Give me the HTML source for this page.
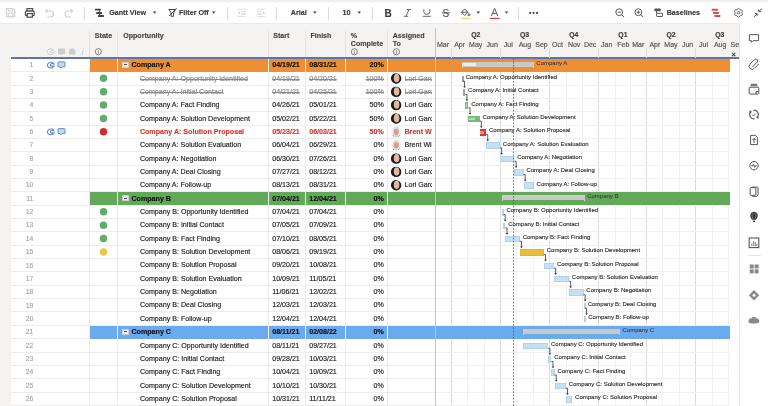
<!DOCTYPE html><html><head><meta charset="utf-8"><style>
*{margin:0;padding:0;box-sizing:border-box}
html,body{width:768px;height:406px;overflow:hidden;background:#f4f3f1;font-family:"Liberation Sans", sans-serif;}
.ab{position:absolute}
.t{position:absolute;white-space:nowrap;line-height:1;-webkit-text-stroke:0.15px currentColor}
svg{position:absolute;overflow:visible}
</style></head><body><div style="position:absolute;left:0;top:0;width:768px;height:406px;will-change:transform">

<div class="ab" style="left:0;top:0;width:768px;height:1.6px;background:#efefef"></div>
<div class="ab" style="left:0;top:1.6px;width:768px;height:0.6px;background:#e2e2e2"></div>
<div class="ab" style="left:0;top:2.2px;width:768px;height:20.4px;background:#fff"></div>
<div class="ab" style="left:0;top:22.6px;width:768px;height:0.6px;background:#e9e9e9"></div>
<div class="ab" style="left:83.8px;top:6.5px;width:0.8px;height:13px;background:#dcdcdc"></div>
<div class="ab" style="left:226.5px;top:6.5px;width:0.8px;height:13px;background:#dcdcdc"></div>
<div class="ab" style="left:276.3px;top:6.5px;width:0.8px;height:13px;background:#dcdcdc"></div>
<div class="ab" style="left:327.90000000000003px;top:6.5px;width:0.8px;height:13px;background:#dcdcdc"></div>
<div class="ab" style="left:372.1px;top:6.5px;width:0.8px;height:13px;background:#dcdcdc"></div>
<div class="ab" style="left:517.9px;top:6.5px;width:0.8px;height:13px;background:#dcdcdc"></div>
<svg style="left:0;top:0" width="1" height="1"><g fill="none" stroke="#d4d4d4" stroke-width="1.2">
<path d="M6.4 8.6 H13.2 L14.8 10.2 V16.6 H6.4Z"/><path d="M8.4 8.6 V11 H12.4 V8.6"/><rect x="8.2" y="13.2" width="4.6" height="3.4"/></g></svg>
<svg style="left:0;top:0" width="1" height="1"><g fill="none" stroke="#555" stroke-width="1.3">
<path d="M27 11 V8.6 H32.6 V11"/><rect x="25.4" y="11" width="8.8" height="4.6" rx="1.2"/><rect x="27.2" y="13.6" width="5.2" height="3.6" fill="#fff"/></g></svg>
<svg style="left:0;top:0" width="1" height="1"><g fill="none" stroke="#cfcfcf" stroke-width="1.1">
<path d="M46 11 H50.5 A3 3 0 0 1 50.5 17 H47.5"/><path d="M47.6 9.2 L45.8 11 L47.6 12.8"/>
<path d="M72.5 11 H68 A3 3 0 0 0 68 17 H71"/><path d="M70.9 9.2 L72.7 11 L70.9 12.8"/></g></svg>
<svg style="left:0;top:0" width="1" height="1"><g fill="#444">
<rect x="94.9" y="8.7" width="6" height="1.9" rx="0.5"/><rect x="96.2" y="12" width="5.8" height="1.9" rx="0.5"/><rect x="98" y="15.1" width="6" height="1.9" rx="0.5"/><rect x="99" y="10" width="1" height="5.5"/></g></svg>
<div class="t" style="left:109.2px;top:10.3975px;font-size:7.15px;color:#3a3a3a;font-weight:bold;height:7.15px;line-height:7.15px;">Gantt View</div>
<svg style="left:0;top:0" width="1" height="1"><path d="M152.79999999999998 11.5 L156.4 11.5 L154.6 13.7Z" fill="#444"/></svg>
<svg style="left:0;top:0" width="1" height="1"><g fill="none" stroke="#444" stroke-width="1">
<path d="M168.9 9.5 H175.5 L173.6 13 V16.3 H171.2 V13Z" stroke-linejoin="round"/><path d="M169.1 15.9 L176.6 8.2"/></g></svg>
<div class="t" style="left:179.0px;top:10.3975px;font-size:7.15px;color:#3a3a3a;font-weight:bold;height:7.15px;line-height:7.15px;">Filter Off</div>
<svg style="left:0;top:0" width="1" height="1"><path d="M211.95 11.5 L215.55 11.5 L213.75 13.7Z" fill="#444"/></svg>
<svg style="left:0;top:0" width="1" height="1"><g fill="none" stroke="#d6d6d6" stroke-width="0.8">
<path d="M237.2 9.2 H245.8 M241 11.4 H245.8 M241 13.4 H245.8 M241 14.2 H245.8 M237.2 16.4 H245.8"/>
<path d="M256.8 9.2 H265.2 M256.8 11.4 H261.8 M256.8 13.4 H261.8 M256.8 14.2 H261.8 M256.8 16.4 H265.2"/></g>
<path d="M239.9 11 L237.9 12.9 L239.9 14.8Z" fill="#d6d6d6"/><path d="M263 11 L265 12.9 L263 14.8Z" fill="#d6d6d6"/></svg>
<div class="t" style="left:290.8px;top:10.3975px;font-size:7.15px;color:#3a3a3a;font-weight:bold;height:7.15px;line-height:7.15px;">Arial</div>
<svg style="left:0;top:0" width="1" height="1"><path d="M313.0 11.5 L316.6 11.5 L314.8 13.7Z" fill="#444"/></svg>
<div class="t" style="left:342.5px;top:10.3975px;font-size:7.15px;color:#3a3a3a;font-weight:bold;height:7.15px;line-height:7.15px;">10</div>
<svg style="left:0;top:0" width="1" height="1"><path d="M357.4 11.5 L361.0 11.5 L359.2 13.7Z" fill="#444"/></svg>
<div class="t" style="left:384.4px;top:8.5px;font-size:10.0px;color:#3a3a3a;font-weight:bold;height:10.0px;line-height:10.0px;">B</div>
<div class="t" style="left:442.4px;top:8.7px;font-size:10.0px;color:#555;font-weight:normal;height:10.0px;line-height:10.0px;-webkit-text-stroke:0.1px #555">S</div>
<svg style="left:0;top:0" width="1" height="1"><g fill="none" stroke="#555" stroke-width="0.9">
<path d="M406.6 9.6 H410.9 M403.9 16.3 H408.2 M408.9 9.6 L406.0 16.3"/>
<path d="M423.8 9.2 V11.8 A3 2.5 0 0 0 429.8 11.8 V9.2"/><path d="M422.8 16.3 H430.8"/>
<path d="M441.8 12.9 H450.2"/>
</g></svg>
<svg style="left:0;top:0" width="1" height="1"><g fill="none" stroke="#555" stroke-width="1">
<path d="M464.75 8.9 L468 12.2 L464.75 15.5 L461.5 12.2Z"/><path d="M461.6 12.2 H467.9"/><circle cx="469" cy="14.8" r="1" /></g>
<rect x="461" y="17.8" width="10" height="1.2" fill="#f3d77a"/></svg>
<svg style="left:0;top:0" width="1" height="1"><path d="M476.5 11.5 L480.1 11.5 L478.3 13.7Z" fill="#444"/></svg>
<svg style="left:0;top:0" width="1" height="1"><g fill="none" stroke="#555" stroke-width="1">
<path d="M491.4 16 L494.6 8.4 L497.8 16 M492.6 13.4 H496.6"/></g>
<rect x="489.8" y="17.8" width="9.8" height="1.2" fill="#dd4040"/></svg>
<svg style="left:0;top:0" width="1" height="1"><path d="M504.7 11.5 L508.3 11.5 L506.5 13.7Z" fill="#444"/></svg>
<svg style="left:0;top:0" width="1" height="1"><g fill="#444"><circle cx="530.2" cy="12.9" r="1.05"/><circle cx="533.6" cy="12.9" r="1.05"/><circle cx="537" cy="12.9" r="1.05"/></g></svg>
<svg style="left:0;top:0" width="1" height="1"><g fill="none" stroke="#555" stroke-width="1">
<circle cx="619.2" cy="12.2" r="3.4"/><path d="M621.7 14.7 L624 17"/><path d="M617.6 12.2 H620.8"/>
<circle cx="638.4" cy="12.2" r="3.4"/><path d="M640.9 14.7 L643.2 17"/><path d="M636.8 12.2 H640 M638.4 10.6 V13.8"/></g></svg>
<svg style="left:0;top:0" width="1" height="1"><rect x="654.3" y="8.4" width="6.6" height="2.8" rx="1" fill="#555"/><rect x="656.6" y="13.3" width="6" height="3.2" rx="0.6" fill="none" stroke="#555" stroke-width="1"/><rect x="656" y="11" width="1" height="2.4" fill="#555"/></svg>
<div class="t" style="left:666.7px;top:10.3975px;font-size:7.15px;color:#3a3a3a;font-weight:bold;height:7.15px;line-height:7.15px;">Baselines</div>
<svg style="left:0;top:0" width="1" height="1"><g fill="#d64f4a">
<rect x="711.5" y="8.7" width="6.5" height="2" rx="0.8"/><rect x="712.9" y="12" width="6.2" height="2" rx="0.8"/><rect x="714.2" y="14.9" width="6.4" height="2" rx="0.8"/></g></svg>
<svg style="left:0;top:0" width="1" height="1"><g fill="none" stroke="#555" stroke-width="0.9">
<path d="M736.85 9.94 Q738.50 6.90 740.15 9.94 Q743.61 9.85 741.80 12.80 Q743.61 15.75 740.15 15.66 Q738.50 18.70 736.85 15.66 Q733.39 15.75 735.20 12.80 Q733.39 9.85 736.85 9.94Z" stroke-linejoin="round"/><circle cx="738.5" cy="12.8" r="1.3"/></g></svg>
<svg style="left:0;top:0" width="1" height="1"><g stroke="#555" stroke-width="1" fill="none"><path d="M754.2 16.8 L757 14 M755 13.6 H757.2 V15.8"/><path d="M761.9 8.6 L759 11.4 M758.7 9.3 V11.6 H760.9"/></g></svg>
<div class="ab" style="left:89.1px;top:30.5px;width:0.8px;height:27.0px;background:#e3e2df"></div>
<div class="ab" style="left:117.19999999999999px;top:30.5px;width:0.8px;height:27.0px;background:#e3e2df"></div>
<div class="ab" style="left:268.0px;top:30.5px;width:0.8px;height:27.0px;background:#e3e2df"></div>
<div class="ab" style="left:305.0px;top:30.5px;width:0.8px;height:27.0px;background:#e3e2df"></div>
<div class="ab" style="left:345.0px;top:30.5px;width:0.8px;height:27.0px;background:#e3e2df"></div>
<div class="ab" style="left:387.0px;top:30.5px;width:0.8px;height:27.0px;background:#e3e2df"></div>
<div class="t" style="left:94.8px;top:33.115px;font-size:7.1px;color:#454545;font-weight:bold;height:7.1px;line-height:7.1px;">State</div>
<div class="t" style="left:123.2px;top:33.115px;font-size:7.1px;color:#454545;font-weight:bold;height:7.1px;line-height:7.1px;">Opportunity</div>
<div class="t" style="left:273.2px;top:33.115px;font-size:7.1px;color:#454545;font-weight:bold;height:7.1px;line-height:7.1px;">Start</div>
<div class="t" style="left:310.5px;top:33.115px;font-size:7.1px;color:#454545;font-weight:bold;height:7.1px;line-height:7.1px;">Finish</div>
<div class="t" style="left:350.8px;top:33.115px;font-size:7.1px;color:#454545;font-weight:bold;height:7.1px;line-height:7.1px;">%</div>
<div class="t" style="left:350.8px;top:40.915px;font-size:7.1px;color:#454545;font-weight:bold;height:7.1px;line-height:7.1px;">Complete</div>
<div class="t" style="left:392.7px;top:33.115px;font-size:7.1px;color:#454545;font-weight:bold;height:7.1px;line-height:7.1px;">Assigned</div>
<div class="t" style="left:392.7px;top:40.915px;font-size:7.1px;color:#454545;font-weight:bold;height:7.1px;line-height:7.1px;">To</div>
<svg style="left:0;top:0" width="1" height="1"><circle cx="98.4" cy="51.7" r="3.1" fill="none" stroke="#666" stroke-width="0.8"/><path d="M98.4 51.2 V53.5" stroke="#666" stroke-width="0.8"/><circle cx="98.4" cy="50.1" r="0.45" fill="#666"/></svg>
<svg style="left:0;top:0" width="1" height="1"><circle cx="354.4" cy="51.8" r="3.1" fill="none" stroke="#666" stroke-width="0.8"/><path d="M354.4 51.3 V53.599999999999994" stroke="#666" stroke-width="0.8"/><circle cx="354.4" cy="50.199999999999996" r="0.45" fill="#666"/></svg>
<svg style="left:0;top:0" width="1" height="1"><circle cx="396.4" cy="51.8" r="3.1" fill="none" stroke="#666" stroke-width="0.8"/><path d="M396.4 51.3 V53.599999999999994" stroke="#666" stroke-width="0.8"/><circle cx="396.4" cy="50.199999999999996" r="0.45" fill="#666"/></svg>
<svg style="left:0;top:0" width="1" height="1"><path d="M53.9 50.7 A3.5 2.8 0 1 0 53.2 53.7 M54.0 51.5 A1.9 1.5 0 1 0 50.800000000000004 52.800000000000004 H54.4" fill="none" stroke="#cdcdcd" stroke-width="1.0"/><g fill="#cdcdcd" stroke="#cdcdcd">
<path d="M58.6 48.6 H64.6 Q65.2 48.6 65.2 49.2 V53.6 Q65.2 54.2 64.6 54.2 H61.6 L60.6 55.4 L60 54.2 H58.6 Q58 54.2 58 53.6 V49.2 Q58 48.6 58.6 48.6Z" stroke="none"/>
<rect x="69" y="49.6" width="6.4" height="4.8" rx="0.6" stroke="none"/><rect x="70.4" y="48.6" width="3.6" height="1.4" rx="0.5" stroke="none"/>
<path d="M83.1 50.2 L82.1 55" stroke-width="0.9" fill="none"/><circle cx="83.5" cy="48.6" r="0.5" stroke="none"/></g></svg>
<div class="ab" style="left:10.5px;top:57.4px;width:729.0px;height:1.3px;background:#5d75a8"></div>
<div class="ab" style="left:10.5px;top:58.5px;width:425.0px;height:347.5px;background:#fff"></div>
<div class="ab" style="left:435.5px;top:58.5px;width:304.0px;height:347.5px;background:#fff"></div>
<div class="ab" style="left:451.1px;top:58.5px;width:0.8px;height:347.5px;background:#dcdcdc"></div>
<div class="ab" style="left:467.15000000000003px;top:58.5px;width:0.8px;height:347.5px;background:#f1f1f1"></div>
<div class="ab" style="left:483.735px;top:58.5px;width:0.8px;height:347.5px;background:#f1f1f1"></div>
<div class="ab" style="left:499.785px;top:58.5px;width:0.8px;height:347.5px;background:#dcdcdc"></div>
<div class="ab" style="left:516.37px;top:58.5px;width:0.8px;height:347.5px;background:#f1f1f1"></div>
<div class="ab" style="left:532.955px;top:58.5px;width:0.8px;height:347.5px;background:#f1f1f1"></div>
<div class="ab" style="left:549.005px;top:58.5px;width:0.8px;height:347.5px;background:#dcdcdc"></div>
<div class="ab" style="left:565.59px;top:58.5px;width:0.8px;height:347.5px;background:#f1f1f1"></div>
<div class="ab" style="left:581.64px;top:58.5px;width:0.8px;height:347.5px;background:#f1f1f1"></div>
<div class="ab" style="left:598.225px;top:58.5px;width:0.8px;height:347.5px;background:#dcdcdc"></div>
<div class="ab" style="left:614.8100000000001px;top:58.5px;width:0.8px;height:347.5px;background:#f1f1f1"></div>
<div class="ab" style="left:629.7900000000001px;top:58.5px;width:0.8px;height:347.5px;background:#f1f1f1"></div>
<div class="ab" style="left:646.375px;top:58.5px;width:0.8px;height:347.5px;background:#dcdcdc"></div>
<div class="ab" style="left:662.4250000000001px;top:58.5px;width:0.8px;height:347.5px;background:#f1f1f1"></div>
<div class="ab" style="left:679.0100000000001px;top:58.5px;width:0.8px;height:347.5px;background:#f1f1f1"></div>
<div class="ab" style="left:695.0600000000001px;top:58.5px;width:0.8px;height:347.5px;background:#dcdcdc"></div>
<div class="ab" style="left:711.6450000000001px;top:58.5px;width:0.8px;height:347.5px;background:#f1f1f1"></div>
<div class="ab" style="left:728.23px;top:58.5px;width:0.8px;height:347.5px;background:#f1f1f1"></div>
<div class="ab" style="left:728.2px;top:58.5px;width:0.8px;height:347.5px;background:#f0f0f0"></div>
<div class="ab" style="left:10.5px;top:71.14999999999999px;width:425.0px;height:0.8px;background:#ededed"></div>
<div class="ab" style="left:435.5px;top:71.14999999999999px;width:294.6px;height:0.8px;background:#f1f1f1"></div>
<div class="ab" style="left:10.5px;top:84.49999999999999px;width:425.0px;height:0.8px;background:#ededed"></div>
<div class="ab" style="left:435.5px;top:84.49999999999999px;width:294.6px;height:0.8px;background:#f1f1f1"></div>
<div class="ab" style="left:10.5px;top:97.85px;width:425.0px;height:0.8px;background:#ededed"></div>
<div class="ab" style="left:435.5px;top:97.85px;width:294.6px;height:0.8px;background:#f1f1f1"></div>
<div class="ab" style="left:10.5px;top:111.19999999999999px;width:425.0px;height:0.8px;background:#ededed"></div>
<div class="ab" style="left:435.5px;top:111.19999999999999px;width:294.6px;height:0.8px;background:#f1f1f1"></div>
<div class="ab" style="left:10.5px;top:124.54999999999998px;width:425.0px;height:0.8px;background:#ededed"></div>
<div class="ab" style="left:435.5px;top:124.54999999999998px;width:294.6px;height:0.8px;background:#f1f1f1"></div>
<div class="ab" style="left:10.5px;top:137.9px;width:425.0px;height:0.8px;background:#ededed"></div>
<div class="ab" style="left:435.5px;top:137.9px;width:294.6px;height:0.8px;background:#f1f1f1"></div>
<div class="ab" style="left:10.5px;top:151.24999999999997px;width:425.0px;height:0.8px;background:#ededed"></div>
<div class="ab" style="left:435.5px;top:151.24999999999997px;width:294.6px;height:0.8px;background:#f1f1f1"></div>
<div class="ab" style="left:10.5px;top:164.6px;width:425.0px;height:0.8px;background:#ededed"></div>
<div class="ab" style="left:435.5px;top:164.6px;width:294.6px;height:0.8px;background:#f1f1f1"></div>
<div class="ab" style="left:10.5px;top:177.95px;width:425.0px;height:0.8px;background:#ededed"></div>
<div class="ab" style="left:435.5px;top:177.95px;width:294.6px;height:0.8px;background:#f1f1f1"></div>
<div class="ab" style="left:10.5px;top:191.29999999999998px;width:425.0px;height:0.8px;background:#ededed"></div>
<div class="ab" style="left:435.5px;top:191.29999999999998px;width:294.6px;height:0.8px;background:#f1f1f1"></div>
<div class="ab" style="left:10.5px;top:204.65px;width:425.0px;height:0.8px;background:#ededed"></div>
<div class="ab" style="left:435.5px;top:204.65px;width:294.6px;height:0.8px;background:#f1f1f1"></div>
<div class="ab" style="left:10.5px;top:217.99999999999997px;width:425.0px;height:0.8px;background:#ededed"></div>
<div class="ab" style="left:435.5px;top:217.99999999999997px;width:294.6px;height:0.8px;background:#f1f1f1"></div>
<div class="ab" style="left:10.5px;top:231.35px;width:425.0px;height:0.8px;background:#ededed"></div>
<div class="ab" style="left:435.5px;top:231.35px;width:294.6px;height:0.8px;background:#f1f1f1"></div>
<div class="ab" style="left:10.5px;top:244.69999999999996px;width:425.0px;height:0.8px;background:#ededed"></div>
<div class="ab" style="left:435.5px;top:244.69999999999996px;width:294.6px;height:0.8px;background:#f1f1f1"></div>
<div class="ab" style="left:10.5px;top:258.05px;width:425.0px;height:0.8px;background:#ededed"></div>
<div class="ab" style="left:435.5px;top:258.05px;width:294.6px;height:0.8px;background:#f1f1f1"></div>
<div class="ab" style="left:10.5px;top:271.40000000000003px;width:425.0px;height:0.8px;background:#ededed"></div>
<div class="ab" style="left:435.5px;top:271.40000000000003px;width:294.6px;height:0.8px;background:#f1f1f1"></div>
<div class="ab" style="left:10.5px;top:284.75px;width:425.0px;height:0.8px;background:#ededed"></div>
<div class="ab" style="left:435.5px;top:284.75px;width:294.6px;height:0.8px;background:#f1f1f1"></div>
<div class="ab" style="left:10.5px;top:298.1px;width:425.0px;height:0.8px;background:#ededed"></div>
<div class="ab" style="left:435.5px;top:298.1px;width:294.6px;height:0.8px;background:#f1f1f1"></div>
<div class="ab" style="left:10.5px;top:311.45px;width:425.0px;height:0.8px;background:#ededed"></div>
<div class="ab" style="left:435.5px;top:311.45px;width:294.6px;height:0.8px;background:#f1f1f1"></div>
<div class="ab" style="left:10.5px;top:324.8px;width:425.0px;height:0.8px;background:#ededed"></div>
<div class="ab" style="left:435.5px;top:324.8px;width:294.6px;height:0.8px;background:#f1f1f1"></div>
<div class="ab" style="left:10.5px;top:338.15000000000003px;width:425.0px;height:0.8px;background:#ededed"></div>
<div class="ab" style="left:435.5px;top:338.15000000000003px;width:294.6px;height:0.8px;background:#f1f1f1"></div>
<div class="ab" style="left:10.5px;top:351.5px;width:425.0px;height:0.8px;background:#ededed"></div>
<div class="ab" style="left:435.5px;top:351.5px;width:294.6px;height:0.8px;background:#f1f1f1"></div>
<div class="ab" style="left:10.5px;top:364.85px;width:425.0px;height:0.8px;background:#ededed"></div>
<div class="ab" style="left:435.5px;top:364.85px;width:294.6px;height:0.8px;background:#f1f1f1"></div>
<div class="ab" style="left:10.5px;top:378.20000000000005px;width:425.0px;height:0.8px;background:#ededed"></div>
<div class="ab" style="left:435.5px;top:378.20000000000005px;width:294.6px;height:0.8px;background:#f1f1f1"></div>
<div class="ab" style="left:10.5px;top:391.55px;width:425.0px;height:0.8px;background:#ededed"></div>
<div class="ab" style="left:435.5px;top:391.55px;width:294.6px;height:0.8px;background:#f1f1f1"></div>
<div class="ab" style="left:10.5px;top:404.90000000000003px;width:425.0px;height:0.8px;background:#ededed"></div>
<div class="ab" style="left:435.5px;top:404.90000000000003px;width:294.6px;height:0.8px;background:#f1f1f1"></div>
<div class="ab" style="left:89.5px;top:58.5px;width:346.0px;height:13.15px;background:#ef8f35"></div>
<div class="ab" style="left:435.5px;top:58.5px;width:294.6px;height:13.15px;background:#ef8f35"></div>
<div class="ab" style="left:89.5px;top:192.0px;width:346.0px;height:13.15px;background:#62aa5a"></div>
<div class="ab" style="left:435.5px;top:192.0px;width:294.6px;height:13.15px;background:#62aa5a"></div>
<div class="ab" style="left:89.5px;top:325.5px;width:346.0px;height:13.15px;background:#6aabef"></div>
<div class="ab" style="left:435.5px;top:325.5px;width:294.6px;height:13.15px;background:#6aabef"></div>
<div class="ab" style="left:89.1px;top:58.5px;width:0.8px;height:347.5px;background:#ececec"></div>
<div class="ab" style="left:117.19999999999999px;top:58.5px;width:0.8px;height:347.5px;background:#ececec"></div>
<div class="ab" style="left:268.0px;top:58.5px;width:0.8px;height:347.5px;background:#ececec"></div>
<div class="ab" style="left:305.0px;top:58.5px;width:0.8px;height:347.5px;background:#ececec"></div>
<div class="ab" style="left:345.0px;top:58.5px;width:0.8px;height:347.5px;background:#ececec"></div>
<div class="ab" style="left:387.0px;top:58.5px;width:0.8px;height:347.5px;background:#ececec"></div>
<div class="ab" style="left:117.19999999999999px;top:58.3px;width:0.8px;height:12.849999999999994px;background:rgba(255,255,255,0.22)"></div>
<div class="ab" style="left:268.0px;top:58.3px;width:0.8px;height:12.849999999999994px;background:rgba(255,255,255,0.22)"></div>
<div class="ab" style="left:305.0px;top:58.3px;width:0.8px;height:12.849999999999994px;background:rgba(255,255,255,0.22)"></div>
<div class="ab" style="left:345.0px;top:58.3px;width:0.8px;height:12.849999999999994px;background:rgba(255,255,255,0.22)"></div>
<div class="ab" style="left:387.0px;top:58.3px;width:0.8px;height:12.849999999999994px;background:rgba(255,255,255,0.22)"></div>
<div class="ab" style="left:117.19999999999999px;top:191.8px;width:0.8px;height:12.849999999999994px;background:rgba(255,255,255,0.22)"></div>
<div class="ab" style="left:268.0px;top:191.8px;width:0.8px;height:12.849999999999994px;background:rgba(255,255,255,0.22)"></div>
<div class="ab" style="left:305.0px;top:191.8px;width:0.8px;height:12.849999999999994px;background:rgba(255,255,255,0.22)"></div>
<div class="ab" style="left:345.0px;top:191.8px;width:0.8px;height:12.849999999999994px;background:rgba(255,255,255,0.22)"></div>
<div class="ab" style="left:387.0px;top:191.8px;width:0.8px;height:12.849999999999994px;background:rgba(255,255,255,0.22)"></div>
<div class="ab" style="left:117.19999999999999px;top:325.3px;width:0.8px;height:12.850000000000023px;background:rgba(255,255,255,0.22)"></div>
<div class="ab" style="left:268.0px;top:325.3px;width:0.8px;height:12.850000000000023px;background:rgba(255,255,255,0.22)"></div>
<div class="ab" style="left:305.0px;top:325.3px;width:0.8px;height:12.850000000000023px;background:rgba(255,255,255,0.22)"></div>
<div class="ab" style="left:345.0px;top:325.3px;width:0.8px;height:12.850000000000023px;background:rgba(255,255,255,0.22)"></div>
<div class="ab" style="left:387.0px;top:325.3px;width:0.8px;height:12.850000000000023px;background:rgba(255,255,255,0.22)"></div>
<div class="ab" style="left:434.7px;top:28px;width:1.8px;height:378px;background:#c4c4c4"></div>
<div class="t" style="left:434.915px;top:41.25px;font-size:7.0px;color:#505050;font-weight:normal;height:7.0px;line-height:7.0px;"><span style="display:inline-block;width:16.26px;text-align:center">Mar</span></div>
<div class="t" style="left:451.5px;top:41.25px;font-size:7.0px;color:#505050;font-weight:normal;height:7.0px;line-height:7.0px;"><span style="display:inline-block;width:16.26px;text-align:center">Apr</span></div>
<div class="ab" style="left:451.1px;top:48px;width:0.8px;height:9.5px;background:#dcdcdc"></div>
<div class="t" style="left:467.55px;top:41.25px;font-size:7.0px;color:#505050;font-weight:normal;height:7.0px;line-height:7.0px;"><span style="display:inline-block;width:16.26px;text-align:center">May</span></div>
<div class="t" style="left:484.135px;top:41.25px;font-size:7.0px;color:#505050;font-weight:normal;height:7.0px;line-height:7.0px;"><span style="display:inline-block;width:16.26px;text-align:center">Jun</span></div>
<div class="t" style="left:500.185px;top:41.25px;font-size:7.0px;color:#505050;font-weight:normal;height:7.0px;line-height:7.0px;"><span style="display:inline-block;width:16.26px;text-align:center">Jul</span></div>
<div class="ab" style="left:499.785px;top:48px;width:0.8px;height:9.5px;background:#dcdcdc"></div>
<div class="t" style="left:516.77px;top:41.25px;font-size:7.0px;color:#505050;font-weight:normal;height:7.0px;line-height:7.0px;"><span style="display:inline-block;width:16.26px;text-align:center">Aug</span></div>
<div class="t" style="left:533.355px;top:41.25px;font-size:7.0px;color:#505050;font-weight:normal;height:7.0px;line-height:7.0px;"><span style="display:inline-block;width:16.26px;text-align:center">Sep</span></div>
<div class="t" style="left:549.405px;top:41.25px;font-size:7.0px;color:#505050;font-weight:normal;height:7.0px;line-height:7.0px;"><span style="display:inline-block;width:16.26px;text-align:center">Oct</span></div>
<div class="ab" style="left:549.005px;top:48px;width:0.8px;height:9.5px;background:#dcdcdc"></div>
<div class="t" style="left:565.99px;top:41.25px;font-size:7.0px;color:#505050;font-weight:normal;height:7.0px;line-height:7.0px;"><span style="display:inline-block;width:16.26px;text-align:center">Nov</span></div>
<div class="t" style="left:582.04px;top:41.25px;font-size:7.0px;color:#505050;font-weight:normal;height:7.0px;line-height:7.0px;"><span style="display:inline-block;width:16.26px;text-align:center">Dec</span></div>
<div class="t" style="left:598.625px;top:41.25px;font-size:7.0px;color:#505050;font-weight:normal;height:7.0px;line-height:7.0px;"><span style="display:inline-block;width:16.26px;text-align:center">Jan</span></div>
<div class="ab" style="left:598.225px;top:48px;width:0.8px;height:9.5px;background:#dcdcdc"></div>
<div class="t" style="left:615.21px;top:41.25px;font-size:7.0px;color:#505050;font-weight:normal;height:7.0px;line-height:7.0px;"><span style="display:inline-block;width:16.26px;text-align:center">Feb</span></div>
<div class="t" style="left:630.19px;top:41.25px;font-size:7.0px;color:#505050;font-weight:normal;height:7.0px;line-height:7.0px;"><span style="display:inline-block;width:16.26px;text-align:center">Mar</span></div>
<div class="t" style="left:646.775px;top:41.25px;font-size:7.0px;color:#505050;font-weight:normal;height:7.0px;line-height:7.0px;"><span style="display:inline-block;width:16.26px;text-align:center">Apr</span></div>
<div class="ab" style="left:646.375px;top:48px;width:0.8px;height:9.5px;background:#dcdcdc"></div>
<div class="t" style="left:662.825px;top:41.25px;font-size:7.0px;color:#505050;font-weight:normal;height:7.0px;line-height:7.0px;"><span style="display:inline-block;width:16.26px;text-align:center">May</span></div>
<div class="t" style="left:679.4100000000001px;top:41.25px;font-size:7.0px;color:#505050;font-weight:normal;height:7.0px;line-height:7.0px;"><span style="display:inline-block;width:16.26px;text-align:center">Jun</span></div>
<div class="t" style="left:695.46px;top:41.25px;font-size:7.0px;color:#505050;font-weight:normal;height:7.0px;line-height:7.0px;"><span style="display:inline-block;width:16.26px;text-align:center">Jul</span></div>
<div class="ab" style="left:695.0600000000001px;top:48px;width:0.8px;height:9.5px;background:#dcdcdc"></div>
<div class="t" style="left:712.0450000000001px;top:41.25px;font-size:7.0px;color:#505050;font-weight:normal;height:7.0px;line-height:7.0px;"><span style="display:inline-block;width:16.26px;text-align:center">Aug</span></div>
<div class="t" style="left:728.63px;top:41.25px;font-size:7.0px;color:#505050;font-weight:normal;height:7.0px;line-height:7.0px;"><span style="display:inline-block;width:16.26px;text-align:center">Sep</span></div>
<div class="t" style="left:451.5px;top:32.085px;font-size:6.9px;color:#3a3a3a;font-weight:bold;height:6.9px;line-height:6.9px;"><span style="display:inline-block;width:48.69px;text-align:center">Q2</span></div>
<div class="t" style="left:500.185px;top:32.085px;font-size:6.9px;color:#3a3a3a;font-weight:bold;height:6.9px;line-height:6.9px;"><span style="display:inline-block;width:48.69px;text-align:center">Q3</span></div>
<div class="t" style="left:549.405px;top:32.085px;font-size:6.9px;color:#3a3a3a;font-weight:bold;height:6.9px;line-height:6.9px;"><span style="display:inline-block;width:48.69px;text-align:center">Q4</span></div>
<div class="t" style="left:598.625px;top:32.085px;font-size:6.9px;color:#3a3a3a;font-weight:bold;height:6.9px;line-height:6.9px;"><span style="display:inline-block;width:48.69px;text-align:center">Q1</span></div>
<div class="t" style="left:646.775px;top:32.085px;font-size:6.9px;color:#3a3a3a;font-weight:bold;height:6.9px;line-height:6.9px;"><span style="display:inline-block;width:48.69px;text-align:center">Q2</span></div>
<div class="t" style="left:695.46px;top:32.085px;font-size:6.9px;color:#3a3a3a;font-weight:bold;height:6.9px;line-height:6.9px;"><span style="display:inline-block;width:48.69px;text-align:center">Q3</span></div>
<div class="ab" style="left:738.9px;top:23.2px;width:29.1px;height:382.8px;background:#fff;border-left:0.8px solid #e6e6e6"></div>
<div class="t" style="left:731.6px;top:51.375px;font-size:7.5px;color:#444;font-weight:bold;height:7.5px;line-height:7.5px;">×</div>
<svg style="left:0;top:0" width="1" height="1"><g transform="translate(754 38.3)" fill="none" stroke="#555" stroke-width="1"><path d="M-4.6 -3.6 H4.6 V2.4 H-1 L-2.6 4 V2.4 H-4.6Z" stroke-linejoin="round"/></g></svg>
<svg style="left:0;top:0" width="1" height="1"><g transform="translate(754 63.2)" fill="none" stroke="#555" stroke-width="1"><path d="M-1.6 3.8 L3.2 -1 A1.8 1.8 0 0 0 0.6 -3.6 L-4 1 A3 3 0 0 0 0.3 5.2 L4.6 0.9" stroke-linecap="round"/></g></svg>
<svg style="left:0;top:0" width="1" height="1"><g transform="translate(754 89.8)" fill="none" stroke="#555" stroke-width="1"><rect x="-4.8" y="-2.6" width="9.6" height="6.8" rx="0.8"/><path d="M-3.6 -4.2 H3.6 M-3 -5.4 H3" stroke-width="1.1" stroke="#777"/><path d="M2 4.2 V1.8 H4.8" /></g></svg>
<svg style="left:0;top:0" width="1" height="1"><g transform="translate(754 114.5)" fill="none" stroke="#555" stroke-width="1"><path d="M-0.6 -4.3 A4.3 4.3 0 0 1 3.4 2.6" stroke-width="1.1"/><path d="M0.6 4.3 A4.3 4.3 0 0 1 -3.4 -2.6" stroke-width="1.1"/><path d="M1.8 2.6 L4.4 4.4 L4.4 1.4Z M-1.8 -2.6 L-4.4 -4.4 L-4.4 -1.4Z" fill="#555" stroke="none"/><path d="M-1.8 0.4 L-0.6 1.6 L1.8 -1" stroke-width="0.9"/></g></svg>
<svg style="left:0;top:0" width="1" height="1"><g transform="translate(754 140)" fill="none" stroke="#555" stroke-width="1"><path d="M-3.4 -4.6 H1.4 L3.4 -2.6 V4.6 H-3.4Z"/><path d="M0 3 V-1.6 M-1.6 0 L0 -1.6 L1.6 0"/></g></svg>
<svg style="left:0;top:0" width="1" height="1"><g transform="translate(754 165.7)" fill="none" stroke="#555" stroke-width="1"><circle r="4.2"/><path d="M-2.8 0.2 H-1.6 L-0.6 -1.6 L0.8 1.6 L1.6 0 H2.8"/></g></svg>
<svg style="left:0;top:0" width="1" height="1"><g transform="translate(754 191.7)" fill="none" stroke="#555" stroke-width="1"><rect x="-3.8" y="-4" width="5.6" height="7.6" rx="0.8"/><path d="M-1.8 -4.6 H3.2 A0.8 0.8 0 0 1 4 -3.8 V3.2 L2.6 4.6 H-1.8"/></g></svg>
<svg style="left:0;top:0" width="1" height="1"><g transform="translate(754 217)" fill="none" stroke="#555" stroke-width="1"><path d="M0 -5.2 C-4.6 -5.2 -4.8 0.6 -1.4 3 H1.4 C4.8 0.6 4.6 -5.2 0 -5.2Z" fill="#3a3a3a" stroke="none"/><path d="M-1.4 -4.8 C-2.4 -2 -1.6 1.4 -0.6 3 M1.4 -4.8 C2.4 -2 1.6 1.4 0.6 3" stroke="#aaa" stroke-width="0.5"/><rect x="-1" y="3.6" width="2" height="1.4" fill="#3a3a3a" stroke="none"/></g></svg>
<svg style="left:0;top:0" width="1" height="1"><g transform="translate(754 242.8)" fill="none" stroke="#555" stroke-width="1"><rect x="-4.8" y="-4.8" width="9.6" height="9.6" stroke="#555" stroke-width="1.1"/><path d="M-2.2 3.4 V0.6 M-0.4 3.4 V-1.8 M1.4 3.4 V-0.8 M2.8 3.4 V1.2" stroke="#888" stroke-width="1.1"/></g></svg>
<div class="ab" style="left:747.8px;top:255.3px;width:13.2px;height:0.6px;background:#e4e4e4"></div>
<svg style="left:0;top:0" width="1" height="1"><g transform="translate(754 269)" fill="none" stroke="#555" stroke-width="1"><g fill="#8a8a8a" stroke="none"><rect x="-4.3" y="-4.5" width="4" height="4"/><rect x="0.6" y="-4.5" width="4" height="4"/><rect x="-4.3" y="0.4" width="4" height="4"/><rect x="0.6" y="0.4" width="4" height="4"/></g></g></svg>
<svg style="left:0;top:0" width="1" height="1"><g transform="translate(754 295.3)" fill="none" stroke="#555" stroke-width="1"><path d="M0 -5.2 L5.2 0 L0 5.2 L-5.2 0Z" fill="#8a8a8a" stroke="none"/><circle r="1.5" fill="#fff" stroke="none"/></g></svg>
<svg style="left:0;top:0" width="1" height="1"><g transform="translate(754 320.4)" fill="none" stroke="#555" stroke-width="1"><path d="M-5.2 2.2 C-6.2 0.4 -4.8 -2.4 -2.6 -2 C-1.8 -3.6 1.2 -3.8 2.2 -2.2 C4.6 -2.6 6.2 0.6 4.8 2.2 C4 3.4 -4.2 3.6 -5.2 2.2Z" fill="#8a8a8a" stroke="none"/></g></svg>
<div class="t" style="left:13.2px;top:62.294999999999995px;font-size:6.8px;color:#a6a6a6;font-weight:normal;height:6.8px;line-height:6.8px;"><span style="display:inline-block;width:20px;text-align:right">1</span></div>
<svg style="left:0;top:0" width="1" height="1"><g stroke="#5a8ad0" fill="none" stroke-width="1">
<path d="M58.6 61.875 H64.4 Q65 61.875 65 62.474999999999994 V66.27499999999999 Q65 66.875 64.4 66.875 H62 L61 68.075 L60.2 66.875 H58.6 Q58 66.875 58 66.27499999999999 V62.474999999999994 Q58 61.875 58.6 61.875Z" fill="#c6daf2"/></g><path d="M54.099999999999994 63.974999999999994 A3.5 2.8 0 1 0 53.4 66.975 M54.199999999999996 64.77499999999999 A1.9 1.5 0 1 0 51.0 66.07499999999999 H54.599999999999994" fill="none" stroke="#5a8ad0" stroke-width="1.1"/></svg>
<div class="ab" style="left:122.2px;top:61.574999999999996px;width:6.4px;height:6.4px;background:#ebebeb;border:0.5px solid #cfcfcf;border-radius:0.8px"></div>
<div class="ab" style="left:123.8px;top:64.27499999999999px;width:3.2px;height:1.1px;background:#555"></div>
<div class="t" style="left:131.5px;top:62.19px;font-size:7.1px;color:#111;font-weight:bold;height:7.1px;line-height:7.1px;">Company A</div>
<div class="t" style="left:272.2px;top:62.19px;font-size:7.1px;color:#111;font-weight:bold;height:7.1px;line-height:7.1px;">04/19/21</div>
<div class="t" style="left:309.2px;top:62.19px;font-size:7.1px;color:#111;font-weight:bold;height:7.1px;line-height:7.1px;">08/31/21</div>
<div class="t" style="left:345.4px;top:62.19px;width:38.400000000000034px;text-align:right;font-size:7.1px;line-height:7.1px;font-weight:bold;color:#111">20%</div>
<div class="t" style="left:13.2px;top:75.645px;font-size:6.8px;color:#a6a6a6;font-weight:normal;height:6.8px;line-height:6.8px;"><span style="display:inline-block;width:20px;text-align:right">2</span></div>
<svg style="left:0;top:0" width="1" height="1"><circle cx="103.5" cy="78.32499999999999" r="3.75" fill="#61ac6c"/></svg>
<div class="t" style="left:139.9px;top:75.53999999999999px;font-size:7.1px;color:#8a8a8a;font-weight:normal;height:7.1px;line-height:7.1px;text-decoration:line-through">Company A: Opportunity Identified</div>
<div class="t" style="left:272.2px;top:75.53999999999999px;font-size:7.1px;color:#8a8a8a;font-weight:normal;height:7.1px;line-height:7.1px;text-decoration:line-through">04/19/21</div>
<div class="t" style="left:309.2px;top:75.53999999999999px;font-size:7.1px;color:#8a8a8a;font-weight:normal;height:7.1px;line-height:7.1px;text-decoration:line-through">04/20/21</div>
<div class="t" style="left:345.4px;top:75.53999999999999px;width:38.400000000000034px;text-align:right;font-size:7.1px;line-height:7.1px;font-weight:normal;color:#8a8a8a;text-decoration:line-through">100%</div>
<svg style="left:0;top:0" width="1" height="1"><defs><clipPath id="cl2"><circle cx="396.2" cy="78.32499999999999" r="5.3"/></clipPath></defs><g clip-path="url(#cl2)"><rect x="390" y="72.32499999999999" width="12" height="12" fill="#efe6e1"/><path d="M390.6 84.32499999999999 L390.6 77.725 Q391.2 73.32499999999999 395.6 73.12499999999999 Q400.4 73.32499999999999 401.4 77.92499999999998 L401.6 84.32499999999999Z" fill="#221b19"/><ellipse cx="396.6" cy="78.12499999999999" rx="2.8" ry="4.0" fill="#ddb9a4"/><path d="M394.2 75.12499999999999 Q396.6 72.92499999999998 399 75.12499999999999 Q396.6 74.32499999999999 394.2 75.12499999999999Z" fill="#e9ddd6"/></g></svg>
<div class="t" style="left:404.5px;top:75.53999999999999px;width:27.5px;overflow:hidden;font-size:7.1px;line-height:7.1px;font-weight:normal;color:#8a8a8a;text-decoration:line-through">Lori Garcia</div>
<div class="t" style="left:13.2px;top:88.995px;font-size:6.8px;color:#a6a6a6;font-weight:normal;height:6.8px;line-height:6.8px;"><span style="display:inline-block;width:20px;text-align:right">3</span></div>
<svg style="left:0;top:0" width="1" height="1"><circle cx="103.5" cy="91.675" r="3.75" fill="#61ac6c"/></svg>
<div class="t" style="left:139.9px;top:88.89px;font-size:7.1px;color:#8a8a8a;font-weight:normal;height:7.1px;line-height:7.1px;text-decoration:line-through">Company A: Initial Contact</div>
<div class="t" style="left:272.2px;top:88.89px;font-size:7.1px;color:#8a8a8a;font-weight:normal;height:7.1px;line-height:7.1px;text-decoration:line-through">04/21/21</div>
<div class="t" style="left:309.2px;top:88.89px;font-size:7.1px;color:#8a8a8a;font-weight:normal;height:7.1px;line-height:7.1px;text-decoration:line-through">04/25/21</div>
<div class="t" style="left:345.4px;top:88.89px;width:38.400000000000034px;text-align:right;font-size:7.1px;line-height:7.1px;font-weight:normal;color:#8a8a8a;text-decoration:line-through">100%</div>
<svg style="left:0;top:0" width="1" height="1"><defs><clipPath id="cl3"><circle cx="396.2" cy="91.675" r="5.3"/></clipPath></defs><g clip-path="url(#cl3)"><rect x="390" y="85.675" width="12" height="12" fill="#efe6e1"/><path d="M390.6 97.675 L390.6 91.075 Q391.2 86.675 395.6 86.475 Q400.4 86.675 401.4 91.27499999999999 L401.6 97.675Z" fill="#221b19"/><ellipse cx="396.6" cy="91.475" rx="2.8" ry="4.0" fill="#ddb9a4"/><path d="M394.2 88.475 Q396.6 86.27499999999999 399 88.475 Q396.6 87.675 394.2 88.475Z" fill="#e9ddd6"/></g></svg>
<div class="t" style="left:404.5px;top:88.89px;width:27.5px;overflow:hidden;font-size:7.1px;line-height:7.1px;font-weight:normal;color:#8a8a8a;text-decoration:line-through">Lori Garcia</div>
<div class="t" style="left:13.2px;top:102.345px;font-size:6.8px;color:#a6a6a6;font-weight:normal;height:6.8px;line-height:6.8px;"><span style="display:inline-block;width:20px;text-align:right">4</span></div>
<svg style="left:0;top:0" width="1" height="1"><circle cx="103.5" cy="105.02499999999999" r="3.75" fill="#61ac6c"/></svg>
<div class="t" style="left:139.9px;top:102.24px;font-size:7.1px;color:#222;font-weight:normal;height:7.1px;line-height:7.1px;">Company A: Fact Finding</div>
<div class="t" style="left:272.2px;top:102.24px;font-size:7.1px;color:#222;font-weight:normal;height:7.1px;line-height:7.1px;">04/26/21</div>
<div class="t" style="left:309.2px;top:102.24px;font-size:7.1px;color:#222;font-weight:normal;height:7.1px;line-height:7.1px;">05/01/21</div>
<div class="t" style="left:345.4px;top:102.24px;width:38.400000000000034px;text-align:right;font-size:7.1px;line-height:7.1px;font-weight:normal;color:#222;">50%</div>
<svg style="left:0;top:0" width="1" height="1"><defs><clipPath id="cl4"><circle cx="396.2" cy="105.02499999999999" r="5.3"/></clipPath></defs><g clip-path="url(#cl4)"><rect x="390" y="99.02499999999999" width="12" height="12" fill="#efe6e1"/><path d="M390.6 111.02499999999999 L390.6 104.425 Q391.2 100.02499999999999 395.6 99.82499999999999 Q400.4 100.02499999999999 401.4 104.62499999999999 L401.6 111.02499999999999Z" fill="#221b19"/><ellipse cx="396.6" cy="104.82499999999999" rx="2.8" ry="4.0" fill="#ddb9a4"/><path d="M394.2 101.82499999999999 Q396.6 99.62499999999999 399 101.82499999999999 Q396.6 101.02499999999999 394.2 101.82499999999999Z" fill="#e9ddd6"/></g></svg>
<div class="t" style="left:404.5px;top:102.24px;width:27.5px;overflow:hidden;font-size:7.1px;line-height:7.1px;font-weight:normal;color:#222;">Lori Garcia</div>
<div class="t" style="left:13.2px;top:115.695px;font-size:6.8px;color:#a6a6a6;font-weight:normal;height:6.8px;line-height:6.8px;"><span style="display:inline-block;width:20px;text-align:right">5</span></div>
<svg style="left:0;top:0" width="1" height="1"><circle cx="103.5" cy="118.37499999999999" r="3.75" fill="#61ac6c"/></svg>
<div class="t" style="left:139.9px;top:115.58999999999999px;font-size:7.1px;color:#222;font-weight:normal;height:7.1px;line-height:7.1px;">Company A: Solution Development</div>
<div class="t" style="left:272.2px;top:115.58999999999999px;font-size:7.1px;color:#222;font-weight:normal;height:7.1px;line-height:7.1px;">05/02/21</div>
<div class="t" style="left:309.2px;top:115.58999999999999px;font-size:7.1px;color:#222;font-weight:normal;height:7.1px;line-height:7.1px;">05/22/21</div>
<div class="t" style="left:345.4px;top:115.58999999999999px;width:38.400000000000034px;text-align:right;font-size:7.1px;line-height:7.1px;font-weight:normal;color:#222;">50%</div>
<svg style="left:0;top:0" width="1" height="1"><defs><clipPath id="cl5"><circle cx="396.2" cy="118.37499999999999" r="5.3"/></clipPath></defs><g clip-path="url(#cl5)"><rect x="390" y="112.37499999999999" width="12" height="12" fill="#efe6e1"/><path d="M390.6 124.37499999999999 L390.6 117.77499999999999 Q391.2 113.37499999999999 395.6 113.17499999999998 Q400.4 113.37499999999999 401.4 117.97499999999998 L401.6 124.37499999999999Z" fill="#221b19"/><ellipse cx="396.6" cy="118.17499999999998" rx="2.8" ry="4.0" fill="#ddb9a4"/><path d="M394.2 115.17499999999998 Q396.6 112.97499999999998 399 115.17499999999998 Q396.6 114.37499999999999 394.2 115.17499999999998Z" fill="#e9ddd6"/></g></svg>
<div class="t" style="left:404.5px;top:115.58999999999999px;width:27.5px;overflow:hidden;font-size:7.1px;line-height:7.1px;font-weight:normal;color:#222;">Lori Garcia</div>
<div class="t" style="left:13.2px;top:129.045px;font-size:6.8px;color:#a6a6a6;font-weight:normal;height:6.8px;line-height:6.8px;"><span style="display:inline-block;width:20px;text-align:right">6</span></div>
<svg style="left:0;top:0" width="1" height="1"><g stroke="#5a8ad0" fill="none" stroke-width="1">
<path d="M58.6 128.62499999999997 H64.4 Q65 128.62499999999997 65 129.225 V133.02499999999998 Q65 133.62499999999997 64.4 133.62499999999997 H62 L61 134.825 L60.2 133.62499999999997 H58.6 Q58 133.62499999999997 58 133.02499999999998 V129.225 Q58 128.62499999999997 58.6 128.62499999999997Z" fill="#c6daf2"/></g><path d="M54.099999999999994 130.725 A3.5 2.8 0 1 0 53.4 133.725 M54.199999999999996 131.525 A1.9 1.5 0 1 0 51.0 132.825 H54.599999999999994" fill="none" stroke="#5a8ad0" stroke-width="1.1"/></svg>
<svg style="left:0;top:0" width="1" height="1"><circle cx="103.5" cy="131.725" r="3.75" fill="#cf2f2a"/></svg>
<div class="t" style="left:139.9px;top:128.93999999999997px;font-size:7.1px;color:#d23b30;font-weight:bold;height:7.1px;line-height:7.1px;">Company A: Solution Proposal</div>
<div class="t" style="left:272.2px;top:128.93999999999997px;font-size:7.1px;color:#d23b30;font-weight:bold;height:7.1px;line-height:7.1px;">05/23/21</div>
<div class="t" style="left:309.2px;top:128.93999999999997px;font-size:7.1px;color:#d23b30;font-weight:bold;height:7.1px;line-height:7.1px;">06/03/21</div>
<div class="t" style="left:345.4px;top:128.93999999999997px;width:38.400000000000034px;text-align:right;font-size:7.1px;line-height:7.1px;font-weight:bold;color:#d23b30;">50%</div>
<svg style="left:0;top:0" width="1" height="1"><defs><clipPath id="cl6"><circle cx="396.2" cy="131.725" r="5.3"/></clipPath></defs><g clip-path="url(#cl6)"><rect x="390" y="125.725" width="12" height="12" fill="#f4f2f0"/><ellipse cx="396.2" cy="131.525" rx="2.7" ry="3.6" fill="#d6a08a"/><path d="M393.4 129.725 Q393.6 126.725 396.2 126.82499999999999 Q398.8 126.725 399 129.725 Q396.2 128.325 393.4 129.725Z" fill="#e2d6d0"/><path d="M391.4 137.125 L393.2 135.125 L394.6 137.125Z M397.8 137.125 L399.2 135.125 L401 137.125Z" fill="#2f3440"/><rect x="394.6" y="134.92499999999998" width="3.2" height="2.4" fill="#c8d6ea"/></g></svg>
<div class="t" style="left:404.5px;top:128.93999999999997px;width:27.5px;overflow:hidden;font-size:7.1px;line-height:7.1px;font-weight:bold;color:#d23b30;">Brent Williams</div>
<div class="t" style="left:13.2px;top:142.39499999999998px;font-size:6.8px;color:#a6a6a6;font-weight:normal;height:6.8px;line-height:6.8px;"><span style="display:inline-block;width:20px;text-align:right">7</span></div>
<div class="t" style="left:139.9px;top:142.28999999999996px;font-size:7.1px;color:#222;font-weight:normal;height:7.1px;line-height:7.1px;">Company A: Solution Evaluation</div>
<div class="t" style="left:272.2px;top:142.28999999999996px;font-size:7.1px;color:#222;font-weight:normal;height:7.1px;line-height:7.1px;">06/04/21</div>
<div class="t" style="left:309.2px;top:142.28999999999996px;font-size:7.1px;color:#222;font-weight:normal;height:7.1px;line-height:7.1px;">06/29/21</div>
<div class="t" style="left:345.4px;top:142.28999999999996px;width:38.400000000000034px;text-align:right;font-size:7.1px;line-height:7.1px;font-weight:normal;color:#222;">0%</div>
<svg style="left:0;top:0" width="1" height="1"><defs><clipPath id="cl7"><circle cx="396.2" cy="145.075" r="5.3"/></clipPath></defs><g clip-path="url(#cl7)"><rect x="390" y="139.075" width="12" height="12" fill="#f4f2f0"/><ellipse cx="396.2" cy="144.875" rx="2.7" ry="3.6" fill="#d6a08a"/><path d="M393.4 143.075 Q393.6 140.075 396.2 140.17499999999998 Q398.8 140.075 399 143.075 Q396.2 141.67499999999998 393.4 143.075Z" fill="#e2d6d0"/><path d="M391.4 150.475 L393.2 148.475 L394.6 150.475Z M397.8 150.475 L399.2 148.475 L401 150.475Z" fill="#2f3440"/><rect x="394.6" y="148.27499999999998" width="3.2" height="2.4" fill="#c8d6ea"/></g></svg>
<div class="t" style="left:404.5px;top:142.28999999999996px;width:27.5px;overflow:hidden;font-size:7.1px;line-height:7.1px;font-weight:normal;color:#222;">Brent Williams</div>
<div class="t" style="left:13.2px;top:155.745px;font-size:6.8px;color:#a6a6a6;font-weight:normal;height:6.8px;line-height:6.8px;"><span style="display:inline-block;width:20px;text-align:right">8</span></div>
<div class="t" style="left:139.9px;top:155.64px;font-size:7.1px;color:#222;font-weight:normal;height:7.1px;line-height:7.1px;">Company A: Negotiation</div>
<div class="t" style="left:272.2px;top:155.64px;font-size:7.1px;color:#222;font-weight:normal;height:7.1px;line-height:7.1px;">06/30/21</div>
<div class="t" style="left:309.2px;top:155.64px;font-size:7.1px;color:#222;font-weight:normal;height:7.1px;line-height:7.1px;">07/26/21</div>
<div class="t" style="left:345.4px;top:155.64px;width:38.400000000000034px;text-align:right;font-size:7.1px;line-height:7.1px;font-weight:normal;color:#222;">0%</div>
<svg style="left:0;top:0" width="1" height="1"><defs><clipPath id="cl8"><circle cx="396.2" cy="158.425" r="5.3"/></clipPath></defs><g clip-path="url(#cl8)"><rect x="390" y="152.425" width="12" height="12" fill="#efe6e1"/><path d="M390.6 164.425 L390.6 157.82500000000002 Q391.2 153.425 395.6 153.22500000000002 Q400.4 153.425 401.4 158.025 L401.6 164.425Z" fill="#221b19"/><ellipse cx="396.6" cy="158.22500000000002" rx="2.8" ry="4.0" fill="#ddb9a4"/><path d="M394.2 155.22500000000002 Q396.6 153.025 399 155.22500000000002 Q396.6 154.425 394.2 155.22500000000002Z" fill="#e9ddd6"/></g></svg>
<div class="t" style="left:404.5px;top:155.64px;width:27.5px;overflow:hidden;font-size:7.1px;line-height:7.1px;font-weight:normal;color:#222;">Lori Garcia</div>
<div class="t" style="left:13.2px;top:169.095px;font-size:6.8px;color:#a6a6a6;font-weight:normal;height:6.8px;line-height:6.8px;"><span style="display:inline-block;width:20px;text-align:right">9</span></div>
<div class="t" style="left:139.9px;top:168.98999999999998px;font-size:7.1px;color:#222;font-weight:normal;height:7.1px;line-height:7.1px;">Company A: Deal Closing</div>
<div class="t" style="left:272.2px;top:168.98999999999998px;font-size:7.1px;color:#222;font-weight:normal;height:7.1px;line-height:7.1px;">07/27/21</div>
<div class="t" style="left:309.2px;top:168.98999999999998px;font-size:7.1px;color:#222;font-weight:normal;height:7.1px;line-height:7.1px;">08/12/21</div>
<div class="t" style="left:345.4px;top:168.98999999999998px;width:38.400000000000034px;text-align:right;font-size:7.1px;line-height:7.1px;font-weight:normal;color:#222;">0%</div>
<svg style="left:0;top:0" width="1" height="1"><defs><clipPath id="cl9"><circle cx="396.2" cy="171.775" r="5.3"/></clipPath></defs><g clip-path="url(#cl9)"><rect x="390" y="165.775" width="12" height="12" fill="#efe6e1"/><path d="M390.6 177.775 L390.6 171.175 Q391.2 166.775 395.6 166.57500000000002 Q400.4 166.775 401.4 171.375 L401.6 177.775Z" fill="#221b19"/><ellipse cx="396.6" cy="171.57500000000002" rx="2.8" ry="4.0" fill="#ddb9a4"/><path d="M394.2 168.57500000000002 Q396.6 166.375 399 168.57500000000002 Q396.6 167.775 394.2 168.57500000000002Z" fill="#e9ddd6"/></g></svg>
<div class="t" style="left:404.5px;top:168.98999999999998px;width:27.5px;overflow:hidden;font-size:7.1px;line-height:7.1px;font-weight:normal;color:#222;">Lori Garcia</div>
<div class="t" style="left:13.2px;top:182.445px;font-size:6.8px;color:#a6a6a6;font-weight:normal;height:6.8px;line-height:6.8px;"><span style="display:inline-block;width:20px;text-align:right">10</span></div>
<div class="t" style="left:139.9px;top:182.33999999999997px;font-size:7.1px;color:#222;font-weight:normal;height:7.1px;line-height:7.1px;">Company A: Follow-up</div>
<div class="t" style="left:272.2px;top:182.33999999999997px;font-size:7.1px;color:#222;font-weight:normal;height:7.1px;line-height:7.1px;">08/13/21</div>
<div class="t" style="left:309.2px;top:182.33999999999997px;font-size:7.1px;color:#222;font-weight:normal;height:7.1px;line-height:7.1px;">08/31/21</div>
<div class="t" style="left:345.4px;top:182.33999999999997px;width:38.400000000000034px;text-align:right;font-size:7.1px;line-height:7.1px;font-weight:normal;color:#222;">0%</div>
<svg style="left:0;top:0" width="1" height="1"><defs><clipPath id="cl10"><circle cx="396.2" cy="185.125" r="5.3"/></clipPath></defs><g clip-path="url(#cl10)"><rect x="390" y="179.125" width="12" height="12" fill="#efe6e1"/><path d="M390.6 191.125 L390.6 184.525 Q391.2 180.125 395.6 179.925 Q400.4 180.125 401.4 184.725 L401.6 191.125Z" fill="#221b19"/><ellipse cx="396.6" cy="184.925" rx="2.8" ry="4.0" fill="#ddb9a4"/><path d="M394.2 181.925 Q396.6 179.725 399 181.925 Q396.6 181.125 394.2 181.925Z" fill="#e9ddd6"/></g></svg>
<div class="t" style="left:404.5px;top:182.33999999999997px;width:27.5px;overflow:hidden;font-size:7.1px;line-height:7.1px;font-weight:normal;color:#222;">Lori Garcia</div>
<div class="t" style="left:13.2px;top:195.79500000000002px;font-size:6.8px;color:#a6a6a6;font-weight:normal;height:6.8px;line-height:6.8px;"><span style="display:inline-block;width:20px;text-align:right">11</span></div>
<div class="ab" style="left:122.2px;top:195.07500000000002px;width:6.4px;height:6.4px;background:#ebebeb;border:0.5px solid #cfcfcf;border-radius:0.8px"></div>
<div class="ab" style="left:123.8px;top:197.775px;width:3.2px;height:1.1px;background:#555"></div>
<div class="t" style="left:131.5px;top:195.69px;font-size:7.1px;color:#111;font-weight:bold;height:7.1px;line-height:7.1px;">Company B</div>
<div class="t" style="left:272.2px;top:195.69px;font-size:7.1px;color:#111;font-weight:bold;height:7.1px;line-height:7.1px;">07/04/21</div>
<div class="t" style="left:309.2px;top:195.69px;font-size:7.1px;color:#111;font-weight:bold;height:7.1px;line-height:7.1px;">12/04/21</div>
<div class="t" style="left:345.4px;top:195.69px;width:38.400000000000034px;text-align:right;font-size:7.1px;line-height:7.1px;font-weight:bold;color:#111">0%</div>
<div class="t" style="left:13.2px;top:209.14499999999998px;font-size:6.8px;color:#a6a6a6;font-weight:normal;height:6.8px;line-height:6.8px;"><span style="display:inline-block;width:20px;text-align:right">12</span></div>
<svg style="left:0;top:0" width="1" height="1"><circle cx="103.5" cy="211.825" r="3.75" fill="#61ac6c"/></svg>
<div class="t" style="left:139.9px;top:209.03999999999996px;font-size:7.1px;color:#222;font-weight:normal;height:7.1px;line-height:7.1px;">Company B: Opportunity Identified</div>
<div class="t" style="left:272.2px;top:209.03999999999996px;font-size:7.1px;color:#222;font-weight:normal;height:7.1px;line-height:7.1px;">07/04/21</div>
<div class="t" style="left:309.2px;top:209.03999999999996px;font-size:7.1px;color:#222;font-weight:normal;height:7.1px;line-height:7.1px;">07/04/21</div>
<div class="t" style="left:345.4px;top:209.03999999999996px;width:38.400000000000034px;text-align:right;font-size:7.1px;line-height:7.1px;font-weight:normal;color:#222;">0%</div>
<div class="t" style="left:13.2px;top:222.495px;font-size:6.8px;color:#a6a6a6;font-weight:normal;height:6.8px;line-height:6.8px;"><span style="display:inline-block;width:20px;text-align:right">13</span></div>
<svg style="left:0;top:0" width="1" height="1"><circle cx="103.5" cy="225.175" r="3.75" fill="#61ac6c"/></svg>
<div class="t" style="left:139.9px;top:222.39px;font-size:7.1px;color:#222;font-weight:normal;height:7.1px;line-height:7.1px;">Company B: Initial Contact</div>
<div class="t" style="left:272.2px;top:222.39px;font-size:7.1px;color:#222;font-weight:normal;height:7.1px;line-height:7.1px;">07/05/21</div>
<div class="t" style="left:309.2px;top:222.39px;font-size:7.1px;color:#222;font-weight:normal;height:7.1px;line-height:7.1px;">07/09/21</div>
<div class="t" style="left:345.4px;top:222.39px;width:38.400000000000034px;text-align:right;font-size:7.1px;line-height:7.1px;font-weight:normal;color:#222;">0%</div>
<div class="t" style="left:13.2px;top:235.84499999999997px;font-size:6.8px;color:#a6a6a6;font-weight:normal;height:6.8px;line-height:6.8px;"><span style="display:inline-block;width:20px;text-align:right">14</span></div>
<svg style="left:0;top:0" width="1" height="1"><circle cx="103.5" cy="238.52499999999998" r="3.75" fill="#61ac6c"/></svg>
<div class="t" style="left:139.9px;top:235.73999999999995px;font-size:7.1px;color:#222;font-weight:normal;height:7.1px;line-height:7.1px;">Company B: Fact Finding</div>
<div class="t" style="left:272.2px;top:235.73999999999995px;font-size:7.1px;color:#222;font-weight:normal;height:7.1px;line-height:7.1px;">07/10/21</div>
<div class="t" style="left:309.2px;top:235.73999999999995px;font-size:7.1px;color:#222;font-weight:normal;height:7.1px;line-height:7.1px;">08/05/21</div>
<div class="t" style="left:345.4px;top:235.73999999999995px;width:38.400000000000034px;text-align:right;font-size:7.1px;line-height:7.1px;font-weight:normal;color:#222;">0%</div>
<div class="t" style="left:13.2px;top:249.195px;font-size:6.8px;color:#a6a6a6;font-weight:normal;height:6.8px;line-height:6.8px;"><span style="display:inline-block;width:20px;text-align:right">15</span></div>
<svg style="left:0;top:0" width="1" height="1"><circle cx="103.5" cy="251.875" r="3.75" fill="#ebc648"/></svg>
<div class="t" style="left:139.9px;top:249.08999999999997px;font-size:7.1px;color:#222;font-weight:normal;height:7.1px;line-height:7.1px;">Company B: Solution Development</div>
<div class="t" style="left:272.2px;top:249.08999999999997px;font-size:7.1px;color:#222;font-weight:normal;height:7.1px;line-height:7.1px;">08/06/21</div>
<div class="t" style="left:309.2px;top:249.08999999999997px;font-size:7.1px;color:#222;font-weight:normal;height:7.1px;line-height:7.1px;">09/19/21</div>
<div class="t" style="left:345.4px;top:249.08999999999997px;width:38.400000000000034px;text-align:right;font-size:7.1px;line-height:7.1px;font-weight:normal;color:#222;">0%</div>
<div class="t" style="left:13.2px;top:262.545px;font-size:6.8px;color:#a6a6a6;font-weight:normal;height:6.8px;line-height:6.8px;"><span style="display:inline-block;width:20px;text-align:right">16</span></div>
<div class="t" style="left:139.9px;top:262.44px;font-size:7.1px;color:#222;font-weight:normal;height:7.1px;line-height:7.1px;">Company B: Solution Proposal</div>
<div class="t" style="left:272.2px;top:262.44px;font-size:7.1px;color:#222;font-weight:normal;height:7.1px;line-height:7.1px;">09/20/21</div>
<div class="t" style="left:309.2px;top:262.44px;font-size:7.1px;color:#222;font-weight:normal;height:7.1px;line-height:7.1px;">10/08/21</div>
<div class="t" style="left:345.4px;top:262.44px;width:38.400000000000034px;text-align:right;font-size:7.1px;line-height:7.1px;font-weight:normal;color:#222;">0%</div>
<div class="t" style="left:13.2px;top:275.895px;font-size:6.8px;color:#a6a6a6;font-weight:normal;height:6.8px;line-height:6.8px;"><span style="display:inline-block;width:20px;text-align:right">17</span></div>
<div class="t" style="left:139.9px;top:275.78999999999996px;font-size:7.1px;color:#222;font-weight:normal;height:7.1px;line-height:7.1px;">Company B: Solution Evaluation</div>
<div class="t" style="left:272.2px;top:275.78999999999996px;font-size:7.1px;color:#222;font-weight:normal;height:7.1px;line-height:7.1px;">10/09/21</div>
<div class="t" style="left:309.2px;top:275.78999999999996px;font-size:7.1px;color:#222;font-weight:normal;height:7.1px;line-height:7.1px;">11/05/21</div>
<div class="t" style="left:345.4px;top:275.78999999999996px;width:38.400000000000034px;text-align:right;font-size:7.1px;line-height:7.1px;font-weight:normal;color:#222;">0%</div>
<div class="t" style="left:13.2px;top:289.245px;font-size:6.8px;color:#a6a6a6;font-weight:normal;height:6.8px;line-height:6.8px;"><span style="display:inline-block;width:20px;text-align:right">18</span></div>
<div class="t" style="left:139.9px;top:289.14px;font-size:7.1px;color:#222;font-weight:normal;height:7.1px;line-height:7.1px;">Company B: Negotiation</div>
<div class="t" style="left:272.2px;top:289.14px;font-size:7.1px;color:#222;font-weight:normal;height:7.1px;line-height:7.1px;">11/06/21</div>
<div class="t" style="left:309.2px;top:289.14px;font-size:7.1px;color:#222;font-weight:normal;height:7.1px;line-height:7.1px;">12/02/21</div>
<div class="t" style="left:345.4px;top:289.14px;width:38.400000000000034px;text-align:right;font-size:7.1px;line-height:7.1px;font-weight:normal;color:#222;">0%</div>
<div class="t" style="left:13.2px;top:302.59499999999997px;font-size:6.8px;color:#a6a6a6;font-weight:normal;height:6.8px;line-height:6.8px;"><span style="display:inline-block;width:20px;text-align:right">19</span></div>
<div class="t" style="left:139.9px;top:302.48999999999995px;font-size:7.1px;color:#222;font-weight:normal;height:7.1px;line-height:7.1px;">Company B: Deal Closing</div>
<div class="t" style="left:272.2px;top:302.48999999999995px;font-size:7.1px;color:#222;font-weight:normal;height:7.1px;line-height:7.1px;">12/03/21</div>
<div class="t" style="left:309.2px;top:302.48999999999995px;font-size:7.1px;color:#222;font-weight:normal;height:7.1px;line-height:7.1px;">12/03/21</div>
<div class="t" style="left:345.4px;top:302.48999999999995px;width:38.400000000000034px;text-align:right;font-size:7.1px;line-height:7.1px;font-weight:normal;color:#222;">0%</div>
<div class="t" style="left:13.2px;top:315.945px;font-size:6.8px;color:#a6a6a6;font-weight:normal;height:6.8px;line-height:6.8px;"><span style="display:inline-block;width:20px;text-align:right">20</span></div>
<div class="t" style="left:139.9px;top:315.84px;font-size:7.1px;color:#222;font-weight:normal;height:7.1px;line-height:7.1px;">Company B: Follow-up</div>
<div class="t" style="left:272.2px;top:315.84px;font-size:7.1px;color:#222;font-weight:normal;height:7.1px;line-height:7.1px;">12/04/21</div>
<div class="t" style="left:309.2px;top:315.84px;font-size:7.1px;color:#222;font-weight:normal;height:7.1px;line-height:7.1px;">12/04/21</div>
<div class="t" style="left:345.4px;top:315.84px;width:38.400000000000034px;text-align:right;font-size:7.1px;line-height:7.1px;font-weight:normal;color:#222;">0%</div>
<div class="t" style="left:13.2px;top:329.295px;font-size:6.8px;color:#a6a6a6;font-weight:normal;height:6.8px;line-height:6.8px;"><span style="display:inline-block;width:20px;text-align:right">21</span></div>
<div class="ab" style="left:122.2px;top:328.575px;width:6.4px;height:6.4px;background:#ebebeb;border:0.5px solid #cfcfcf;border-radius:0.8px"></div>
<div class="ab" style="left:123.8px;top:331.27500000000003px;width:3.2px;height:1.1px;background:#555"></div>
<div class="t" style="left:131.5px;top:329.19px;font-size:7.1px;color:#111;font-weight:bold;height:7.1px;line-height:7.1px;">Company C</div>
<div class="t" style="left:272.2px;top:329.19px;font-size:7.1px;color:#111;font-weight:bold;height:7.1px;line-height:7.1px;">08/11/21</div>
<div class="t" style="left:309.2px;top:329.19px;font-size:7.1px;color:#111;font-weight:bold;height:7.1px;line-height:7.1px;">02/08/22</div>
<div class="t" style="left:345.4px;top:329.19px;width:38.400000000000034px;text-align:right;font-size:7.1px;line-height:7.1px;font-weight:bold;color:#111">0%</div>
<div class="t" style="left:13.2px;top:342.645px;font-size:6.8px;color:#a6a6a6;font-weight:normal;height:6.8px;line-height:6.8px;"><span style="display:inline-block;width:20px;text-align:right">22</span></div>
<div class="t" style="left:139.9px;top:342.53999999999996px;font-size:7.1px;color:#222;font-weight:normal;height:7.1px;line-height:7.1px;">Company C: Opportunity Identified</div>
<div class="t" style="left:272.2px;top:342.53999999999996px;font-size:7.1px;color:#222;font-weight:normal;height:7.1px;line-height:7.1px;">08/11/21</div>
<div class="t" style="left:309.2px;top:342.53999999999996px;font-size:7.1px;color:#222;font-weight:normal;height:7.1px;line-height:7.1px;">09/27/21</div>
<div class="t" style="left:345.4px;top:342.53999999999996px;width:38.400000000000034px;text-align:right;font-size:7.1px;line-height:7.1px;font-weight:normal;color:#222;">0%</div>
<div class="t" style="left:13.2px;top:355.995px;font-size:6.8px;color:#a6a6a6;font-weight:normal;height:6.8px;line-height:6.8px;"><span style="display:inline-block;width:20px;text-align:right">23</span></div>
<div class="t" style="left:139.9px;top:355.89px;font-size:7.1px;color:#222;font-weight:normal;height:7.1px;line-height:7.1px;">Company C: Initial Contact</div>
<div class="t" style="left:272.2px;top:355.89px;font-size:7.1px;color:#222;font-weight:normal;height:7.1px;line-height:7.1px;">09/28/21</div>
<div class="t" style="left:309.2px;top:355.89px;font-size:7.1px;color:#222;font-weight:normal;height:7.1px;line-height:7.1px;">10/03/21</div>
<div class="t" style="left:345.4px;top:355.89px;width:38.400000000000034px;text-align:right;font-size:7.1px;line-height:7.1px;font-weight:normal;color:#222;">0%</div>
<div class="t" style="left:13.2px;top:369.345px;font-size:6.8px;color:#a6a6a6;font-weight:normal;height:6.8px;line-height:6.8px;"><span style="display:inline-block;width:20px;text-align:right">24</span></div>
<div class="t" style="left:139.9px;top:369.24px;font-size:7.1px;color:#222;font-weight:normal;height:7.1px;line-height:7.1px;">Company C: Fact Finding</div>
<div class="t" style="left:272.2px;top:369.24px;font-size:7.1px;color:#222;font-weight:normal;height:7.1px;line-height:7.1px;">10/04/21</div>
<div class="t" style="left:309.2px;top:369.24px;font-size:7.1px;color:#222;font-weight:normal;height:7.1px;line-height:7.1px;">10/09/21</div>
<div class="t" style="left:345.4px;top:369.24px;width:38.400000000000034px;text-align:right;font-size:7.1px;line-height:7.1px;font-weight:normal;color:#222;">0%</div>
<div class="t" style="left:13.2px;top:382.695px;font-size:6.8px;color:#a6a6a6;font-weight:normal;height:6.8px;line-height:6.8px;"><span style="display:inline-block;width:20px;text-align:right">25</span></div>
<div class="t" style="left:139.9px;top:382.59px;font-size:7.1px;color:#222;font-weight:normal;height:7.1px;line-height:7.1px;">Company C: Solution Development</div>
<div class="t" style="left:272.2px;top:382.59px;font-size:7.1px;color:#222;font-weight:normal;height:7.1px;line-height:7.1px;">10/10/21</div>
<div class="t" style="left:309.2px;top:382.59px;font-size:7.1px;color:#222;font-weight:normal;height:7.1px;line-height:7.1px;">10/30/21</div>
<div class="t" style="left:345.4px;top:382.59px;width:38.400000000000034px;text-align:right;font-size:7.1px;line-height:7.1px;font-weight:normal;color:#222;">0%</div>
<div class="t" style="left:13.2px;top:396.045px;font-size:6.8px;color:#a6a6a6;font-weight:normal;height:6.8px;line-height:6.8px;"><span style="display:inline-block;width:20px;text-align:right">26</span></div>
<div class="t" style="left:139.9px;top:395.94px;font-size:7.1px;color:#222;font-weight:normal;height:7.1px;line-height:7.1px;">Company C: Solution Proposal</div>
<div class="t" style="left:272.2px;top:395.94px;font-size:7.1px;color:#222;font-weight:normal;height:7.1px;line-height:7.1px;">10/31/21</div>
<div class="t" style="left:309.2px;top:395.94px;font-size:7.1px;color:#222;font-weight:normal;height:7.1px;line-height:7.1px;">11/11/21</div>
<div class="t" style="left:345.4px;top:395.94px;width:38.400000000000034px;text-align:right;font-size:7.1px;line-height:7.1px;font-weight:normal;color:#222;">0%</div>
<div class="ab" style="left:461.53px;top:61.8px;width:72.22500000000002px;height:5.0px;background:#c9c9c9"></div>
<div class="ab" style="left:461.53px;top:66.8px;width:1px;height:1.2px;background:#d8d8d8"></div>
<div class="ab" style="left:532.755px;top:66.8px;width:1px;height:1.2px;background:#d8d8d8"></div>
<div class="ab" style="left:461.53px;top:62.8px;width:14.445000000000004px;height:3.2px;background:#ececec"></div>
<div class="t" style="left:536.355px;top:59.974999999999994px;font-size:6.0px;color:#444;font-weight:normal;height:6.0px;line-height:6.0px;">Company A</div>
<div class="ab" style="left:461.53px;top:75.64999999999999px;width:1.4px;height:6.5px;background:#bdbdbd;border:0.5px solid #a0a0a0"></div>
<div class="t" style="left:465.72999999999996px;top:73.8px;font-size:6.0px;color:#333;font-weight:normal;height:6.0px;line-height:6.0px;">Company A: Opportunity Identified</div>
<div class="ab" style="left:462.59999999999997px;top:89.0px;width:2.6750000000000114px;height:6.5px;background:#bdbdbd;border:0.5px solid #a0a0a0"></div>
<div class="t" style="left:468.075px;top:87.15px;font-size:6.0px;color:#333;font-weight:normal;height:6.0px;line-height:6.0px;">Company A: Initial Contact</div>
<div class="ab" style="left:465.275px;top:102.35px;width:3.2100000000000364px;height:6.5px;background:#79bc7a;border:0.5px solid #79bc7a"></div>
<div class="ab" style="left:465.875px;top:104.35px;width:1.6050000000000182px;height:2.5px;background:rgba(255,255,255,0.45)"></div>
<div class="t" style="left:471.285px;top:100.5px;font-size:6.0px;color:#333;font-weight:normal;height:6.0px;line-height:6.0px;">Company A: Fact Finding</div>
<div class="ab" style="left:468.48499999999996px;top:115.69999999999999px;width:11.23500000000007px;height:6.5px;background:#79bc7a;border:0.5px solid #79bc7a"></div>
<div class="ab" style="left:469.085px;top:117.69999999999999px;width:5.617500000000035px;height:2.5px;background:rgba(255,255,255,0.45)"></div>
<div class="t" style="left:482.52000000000004px;top:113.85px;font-size:6.0px;color:#333;font-weight:normal;height:6.0px;line-height:6.0px;">Company A: Solution Development</div>
<div class="ab" style="left:479.71999999999997px;top:129.05px;width:6.420000000000016px;height:6.5px;background:#d8382f;border:0.5px solid #d8382f"></div>
<div class="ab" style="left:480.32px;top:131.05px;width:3.210000000000008px;height:2.5px;background:rgba(255,255,255,0.45)"></div>
<div class="t" style="left:488.94px;top:127.20000000000002px;font-size:6.0px;color:#333;font-weight:normal;height:6.0px;line-height:6.0px;">Company A: Solution Proposal</div>
<div class="ab" style="left:486.14px;top:142.39999999999998px;width:13.910000000000025px;height:6.5px;background:#c6dff3;border:0.5px solid #b3d2ec"></div>
<div class="t" style="left:502.85px;top:140.54999999999998px;font-size:6.0px;color:#333;font-weight:normal;height:6.0px;line-height:6.0px;">Company A: Solution Evaluation</div>
<div class="ab" style="left:500.04999999999995px;top:155.75px;width:14.444999999999936px;height:6.5px;background:#c6dff3;border:0.5px solid #b3d2ec"></div>
<div class="t" style="left:517.2949999999998px;top:153.9px;font-size:6.0px;color:#333;font-weight:normal;height:6.0px;line-height:6.0px;">Company A: Negotiation</div>
<div class="ab" style="left:514.495px;top:169.1px;width:9.094999999999914px;height:6.5px;background:#c6dff3;border:0.5px solid #b3d2ec"></div>
<div class="t" style="left:526.3899999999999px;top:167.25px;font-size:6.0px;color:#333;font-weight:normal;height:6.0px;line-height:6.0px;">Company A: Deal Closing</div>
<div class="ab" style="left:523.59px;top:182.45px;width:10.164999999999964px;height:6.5px;background:#c6dff3;border:0.5px solid #b3d2ec"></div>
<div class="t" style="left:536.555px;top:180.6px;font-size:6.0px;color:#333;font-weight:normal;height:6.0px;line-height:6.0px;">Company A: Follow-up</div>
<div class="ab" style="left:502.19px;top:195.3px;width:82.38999999999993px;height:5.0px;background:#c9c9c9"></div>
<div class="ab" style="left:502.19px;top:200.3px;width:1px;height:1.2px;background:#d8d8d8"></div>
<div class="ab" style="left:583.5799999999999px;top:200.3px;width:1px;height:1.2px;background:#d8d8d8"></div>
<div class="t" style="left:587.18px;top:193.47500000000002px;font-size:6.0px;color:#444;font-weight:normal;height:6.0px;line-height:6.0px;">Company B</div>
<div class="ab" style="left:502.19px;top:209.14999999999998px;width:1.4px;height:6.5px;background:#c6dff3;border:0.5px solid #b3d2ec"></div>
<div class="t" style="left:506.39px;top:207.29999999999998px;font-size:6.0px;color:#333;font-weight:normal;height:6.0px;line-height:6.0px;">Company B: Opportunity Identified</div>
<div class="ab" style="left:502.72499999999997px;top:222.5px;width:2.675000000000068px;height:6.5px;background:#c6dff3;border:0.5px solid #b3d2ec"></div>
<div class="t" style="left:508.20000000000005px;top:220.65px;font-size:6.0px;color:#333;font-weight:normal;height:6.0px;line-height:6.0px;">Company B: Initial Contact</div>
<div class="ab" style="left:505.4px;top:235.84999999999997px;width:14.444999999999936px;height:6.5px;background:#c6dff3;border:0.5px solid #b3d2ec"></div>
<div class="t" style="left:522.6449999999999px;top:233.99999999999997px;font-size:6.0px;color:#333;font-weight:normal;height:6.0px;line-height:6.0px;">Company B: Fact Finding</div>
<div class="ab" style="left:519.845px;top:249.2px;width:24.074999999999932px;height:6.5px;background:#e8bd3a;border:0.5px solid #e0b530"></div>
<div class="t" style="left:546.7199999999999px;top:247.35px;font-size:6.0px;color:#333;font-weight:normal;height:6.0px;line-height:6.0px;">Company B: Solution Development</div>
<div class="ab" style="left:543.92px;top:262.55px;width:10.164999999999964px;height:6.5px;background:#c6dff3;border:0.5px solid #b3d2ec"></div>
<div class="t" style="left:556.8849999999999px;top:260.7px;font-size:6.0px;color:#333;font-weight:normal;height:6.0px;line-height:6.0px;">Company B: Solution Proposal</div>
<div class="ab" style="left:554.0849999999999px;top:275.9px;width:14.980000000000018px;height:6.5px;background:#c6dff3;border:0.5px solid #b3d2ec"></div>
<div class="t" style="left:571.8649999999999px;top:274.04999999999995px;font-size:6.0px;color:#333;font-weight:normal;height:6.0px;line-height:6.0px;">Company B: Solution Evaluation</div>
<div class="ab" style="left:569.0649999999999px;top:289.25px;width:14.44500000000005px;height:6.5px;background:#c6dff3;border:0.5px solid #b3d2ec"></div>
<div class="t" style="left:586.31px;top:287.4px;font-size:6.0px;color:#333;font-weight:normal;height:6.0px;line-height:6.0px;">Company B: Negotiation</div>
<div class="ab" style="left:583.51px;top:302.59999999999997px;width:1.4px;height:6.5px;background:#c6dff3;border:0.5px solid #b3d2ec"></div>
<div class="t" style="left:587.7099999999999px;top:300.74999999999994px;font-size:6.0px;color:#333;font-weight:normal;height:6.0px;line-height:6.0px;">Company B: Deal Closing</div>
<div class="ab" style="left:584.045px;top:315.95px;width:1.4px;height:6.5px;background:#c6dff3;border:0.5px solid #b3d2ec"></div>
<div class="t" style="left:588.2449999999999px;top:314.09999999999997px;font-size:6.0px;color:#333;font-weight:normal;height:6.0px;line-height:6.0px;">Company B: Follow-up</div>
<div class="ab" style="left:522.52px;top:328.8px;width:97.37px;height:5.0px;background:#c9c9c9"></div>
<div class="ab" style="left:522.52px;top:333.8px;width:1px;height:1.2px;background:#d8d8d8"></div>
<div class="ab" style="left:618.89px;top:333.8px;width:1px;height:1.2px;background:#d8d8d8"></div>
<div class="t" style="left:622.49px;top:326.975px;font-size:6.0px;color:#444;font-weight:normal;height:6.0px;line-height:6.0px;">Company C</div>
<div class="ab" style="left:522.52px;top:342.65px;width:25.67999999999995px;height:6.5px;background:#c6dff3;border:0.5px solid #b3d2ec"></div>
<div class="t" style="left:550.9999999999999px;top:340.79999999999995px;font-size:6.0px;color:#333;font-weight:normal;height:6.0px;line-height:6.0px;">Company C: Opportunity Identified</div>
<div class="ab" style="left:548.1999999999999px;top:356.0px;width:3.2100000000000364px;height:6.5px;background:#c6dff3;border:0.5px solid #b3d2ec"></div>
<div class="t" style="left:554.2099999999999px;top:354.15px;font-size:6.0px;color:#333;font-weight:normal;height:6.0px;line-height:6.0px;">Company C: Initial Contact</div>
<div class="ab" style="left:551.41px;top:369.35px;width:3.2099999999999227px;height:6.5px;background:#c6dff3;border:0.5px solid #b3d2ec"></div>
<div class="t" style="left:557.4199999999998px;top:367.5px;font-size:6.0px;color:#333;font-weight:normal;height:6.0px;line-height:6.0px;">Company C: Fact Finding</div>
<div class="ab" style="left:554.62px;top:382.7px;width:11.2349999999999px;height:6.5px;background:#c6dff3;border:0.5px solid #b3d2ec"></div>
<div class="t" style="left:568.6549999999999px;top:380.84999999999997px;font-size:6.0px;color:#333;font-weight:normal;height:6.0px;line-height:6.0px;">Company C: Solution Development</div>
<div class="ab" style="left:565.855px;top:396.05px;width:6.419999999999959px;height:6.5px;background:#c6dff3;border:0.5px solid #b3d2ec"></div>
<div class="t" style="left:575.0749999999999px;top:394.2px;font-size:6.0px;color:#333;font-weight:normal;height:6.0px;line-height:6.0px;">Company C: Solution Proposal</div>
<svg style="left:0;top:0" width="1" height="1"><path d="M462.92999999999995 81.14999999999999 H464.53 V86.6" fill="none" stroke="#333" stroke-width="0.8"/><path d="M463.22999999999996 86.2 L465.83 86.2 L464.53 88.0Z" fill="#333"/><path d="M465.275 94.5 H466.875 V99.94999999999999" fill="none" stroke="#333" stroke-width="0.8"/><path d="M465.575 99.55 L468.175 99.55 L466.875 101.35Z" fill="#333"/><path d="M468.485 107.85 H470.08500000000004 V113.29999999999998" fill="none" stroke="#333" stroke-width="0.8"/><path d="M468.785 112.89999999999999 L471.38500000000005 112.89999999999999 L470.08500000000004 114.69999999999999Z" fill="#333"/><path d="M479.72 121.19999999999999 H481.32000000000005 V126.65" fill="none" stroke="#333" stroke-width="0.8"/><path d="M480.02000000000004 126.25000000000001 L482.62000000000006 126.25000000000001 L481.32000000000005 128.05Z" fill="#333"/><path d="M486.14 134.55 H487.74 V139.99999999999997" fill="none" stroke="#333" stroke-width="0.8"/><path d="M486.44 139.59999999999997 L489.04 139.59999999999997 L487.74 141.39999999999998Z" fill="#333"/><path d="M500.05 147.89999999999998 H501.65000000000003 V153.35" fill="none" stroke="#333" stroke-width="0.8"/><path d="M500.35 152.95 L502.95000000000005 152.95 L501.65000000000003 154.75Z" fill="#333"/><path d="M514.4949999999999 161.25 H516.095 V166.7" fill="none" stroke="#333" stroke-width="0.8"/><path d="M514.7950000000001 166.29999999999998 L517.395 166.29999999999998 L516.095 168.1Z" fill="#333"/><path d="M523.5899999999999 174.6 H525.19 V180.04999999999998" fill="none" stroke="#333" stroke-width="0.8"/><path d="M523.8900000000001 179.64999999999998 L526.49 179.64999999999998 L525.19 181.45Z" fill="#333"/><path d="M503.59 214.64999999999998 H505.19 V220.1" fill="none" stroke="#333" stroke-width="0.8"/><path d="M503.89 219.7 L506.49 219.7 L505.19 221.5Z" fill="#333"/><path d="M505.40000000000003 228.0 H507.00000000000006 V233.44999999999996" fill="none" stroke="#333" stroke-width="0.8"/><path d="M505.70000000000005 233.04999999999995 L508.30000000000007 233.04999999999995 L507.00000000000006 234.84999999999997Z" fill="#333"/><path d="M519.8449999999999 241.34999999999997 H521.445 V246.79999999999998" fill="none" stroke="#333" stroke-width="0.8"/><path d="M520.1450000000001 246.39999999999998 L522.745 246.39999999999998 L521.445 248.2Z" fill="#333"/><path d="M543.92 254.7 H545.52 V260.15000000000003" fill="none" stroke="#333" stroke-width="0.8"/><path d="M544.22 259.75 L546.8199999999999 259.75 L545.52 261.55Z" fill="#333"/><path d="M554.0849999999999 268.05 H555.685 V273.5" fill="none" stroke="#333" stroke-width="0.8"/><path d="M554.385 273.09999999999997 L556.9849999999999 273.09999999999997 L555.685 274.9Z" fill="#333"/><path d="M569.0649999999999 281.4 H570.665 V286.85" fill="none" stroke="#333" stroke-width="0.8"/><path d="M569.365 286.45 L571.9649999999999 286.45 L570.665 288.25Z" fill="#333"/><path d="M583.51 294.75 H585.11 V300.2" fill="none" stroke="#333" stroke-width="0.8"/><path d="M583.8100000000001 299.79999999999995 L586.41 299.79999999999995 L585.11 301.59999999999997Z" fill="#333"/><path d="M584.91 308.09999999999997 H586.51 V313.55" fill="none" stroke="#333" stroke-width="0.8"/><path d="M585.21 313.15 L587.81 313.15 L586.51 314.95Z" fill="#333"/><path d="M548.1999999999999 348.15 H549.8 V353.6" fill="none" stroke="#333" stroke-width="0.8"/><path d="M548.5 353.2 L551.0999999999999 353.2 L549.8 355.0Z" fill="#333"/><path d="M551.41 361.5 H553.01 V366.95000000000005" fill="none" stroke="#333" stroke-width="0.8"/><path d="M551.71 366.55 L554.31 366.55 L553.01 368.35Z" fill="#333"/><path d="M554.6199999999999 374.85 H556.22 V380.3" fill="none" stroke="#333" stroke-width="0.8"/><path d="M554.9200000000001 379.9 L557.52 379.9 L556.22 381.7Z" fill="#333"/><path d="M565.8549999999999 388.2 H567.455 V393.65000000000003" fill="none" stroke="#333" stroke-width="0.8"/><path d="M566.1550000000001 393.25 L568.755 393.25 L567.455 395.05Z" fill="#333"/></svg>
<svg style="left:0;top:0" width="1" height="1"><path d="M513.6 58.5 V406" stroke="#555" stroke-width="0.8" stroke-dasharray="1.8 1.4"/></svg>
</div></body></html>
